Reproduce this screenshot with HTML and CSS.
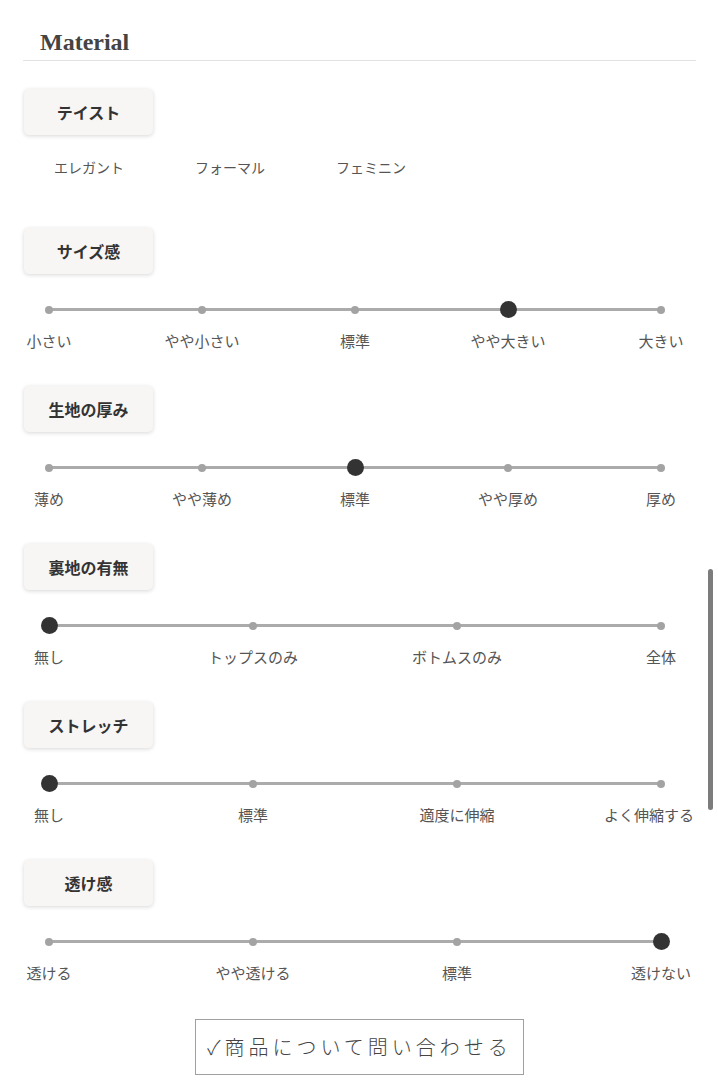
FILE: index.html
```html
<!DOCTYPE html>
<html lang="ja">
<head>
    <meta charset="UTF-8">
    <meta name="viewport" content="width=device-width, initial-scale=1.0">
    <title>Material</title>
    <link rel="stylesheet" href="styles.css">
</head>
<body>
    <div class="material">
        <h2 class="material-title">Material</h2>

        <!-- テイスト -->
        <div class="spec first">
            <div class="spec-label">テイスト</div>
            <div class="taste-list">
                <span class="taste-item">エレガント</span>
                <span class="taste-item">フォーマル</span>
                <span class="taste-item">フェミニン</span>
            </div>
        </div>

        <div class="spec">
            <div class="spec-label">サイズ感</div>
            <div class="scale">
                <div class="point"><span class="dot"></span><span class="point-text">小さい</span></div>
                <div class="point"><span class="dot"></span><span class="point-text">やや小さい</span></div>
                <div class="point"><span class="dot"></span><span class="point-text">標準</span></div>
                <div class="point active"><span class="dot"></span><span class="point-text">やや大きい</span></div>
                <div class="point"><span class="dot"></span><span class="point-text">大きい</span></div>
            </div>
        </div>

        <div class="spec">
            <div class="spec-label">生地の厚み</div>
            <div class="scale">
                <div class="point"><span class="dot"></span><span class="point-text">薄め</span></div>
                <div class="point"><span class="dot"></span><span class="point-text">やや薄め</span></div>
                <div class="point active"><span class="dot"></span><span class="point-text">標準</span></div>
                <div class="point"><span class="dot"></span><span class="point-text">やや厚め</span></div>
                <div class="point"><span class="dot"></span><span class="point-text">厚め</span></div>
            </div>
        </div>

        <div class="spec">
            <div class="spec-label">裏地の有無</div>
            <div class="scale">
                <div class="point active"><span class="dot"></span><span class="point-text">無し</span></div>
                <div class="point"><span class="dot"></span><span class="point-text">トップスのみ</span></div>
                <div class="point"><span class="dot"></span><span class="point-text">ボトムスのみ</span></div>
                <div class="point"><span class="dot"></span><span class="point-text">全体</span></div>
            </div>
        </div>

        <div class="spec">
            <div class="spec-label">ストレッチ</div>
            <div class="scale">
                <div class="point active"><span class="dot"></span><span class="point-text">無し</span></div>
                <div class="point"><span class="dot"></span><span class="point-text">標準</span></div>
                <div class="point"><span class="dot"></span><span class="point-text">適度に伸縮</span></div>
                <div class="point"><span class="dot"></span><span class="point-text edge">よく伸縮する</span></div>
            </div>
        </div>

        <div class="spec">
            <div class="spec-label">透け感</div>
            <div class="scale">
                <div class="point"><span class="dot"></span><span class="point-text">透ける</span></div>
                <div class="point"><span class="dot"></span><span class="point-text">やや透ける</span></div>
                <div class="point"><span class="dot"></span><span class="point-text">標準</span></div>
                <div class="point active"><span class="dot"></span><span class="point-text">透けない</span></div>
            </div>
        </div>

        <div class="contact">
            <a class="contact-btn" href="#">✓商品について問い合わせる</a>
        </div>
    </div>

    <div class="scroll-thumb"></div>
</body>
</html>
```

FILE: styles.css
```css
body {
    margin: 0;
    background: #fff;
    font-family: "Noto Sans CJK JP", "Noto Sans", sans-serif;
    color: #555;
}

.material {
    padding: 0 22px 0 23px;
}

.material-title {
    margin: 0;
    padding: 28px 0 4px 17px;
    font-family: "Liberation Serif", serif;
    font-size: 24px;
    line-height: 28px;
    font-weight: bold;
    color: #444;
    border-bottom: 1px solid #e2e2e2;
}

.spec {
    margin-top: 35px;
}

.spec.first {
    margin-top: 28px;
}

.spec-label {
    width: 129px;
    height: 46px;
    margin-left: 1px;
    background: #f7f6f4;
    border-radius: 5px;
    box-shadow: 0 1px 4px rgba(0,0,0,0.16);
    text-align: center;
    line-height: 46px;
    font-size: 16px;
    font-weight: bold;
    color: #333;
}

/* テイスト */
.taste-list {
    display: flex;
    gap: 71px;
    padding: 0 0 16px 31px;
    margin-top: 22px;
}

.taste-item {
    font-size: 14px;
    line-height: 20px;
    color: #555;
}

/* スケール */
.scale {
    display: flex;
    justify-content: space-between;
    margin: 27px 35px 0 26px;
    background: linear-gradient(#ababab, #ababab) no-repeat 0 7px / 100% 3px;
}

.point {
    width: 0;
    display: flex;
    flex-direction: column;
    align-items: center;
}

.dot {
    height: 17px;
    display: flex;
    align-items: center;
}

.dot::before {
    content: "";
    display: block;
    width: 8px;
    height: 8px;
    border-radius: 50%;
    background: #a3a3a3;
}

.point.active .dot::before {
    width: 17px;
    height: 17px;
    background: #333;
}

.point-text {
    margin-top: 13px;
    font-size: 15px;
    line-height: 20px;
    white-space: nowrap;
    color: #555;
}

.point-text.edge {
    margin-right: 24px;
}

/* お問い合わせ */
.contact {
    display: flex;
    justify-content: center;
    margin-top: 36px;
}

.contact-btn {
    display: block;
    width: 327px;
    height: 54px;
    border: 1px solid #a0a0a0;
    text-align: center;
    line-height: 54px;
    font-size: 20px;
    font-weight: 300;
    letter-spacing: 4px;
    color: #444;
    text-decoration: none;
}

.scroll-thumb {
    position: fixed;
    left: 708px;
    top: 569px;
    width: 5px;
    height: 241px;
    border-radius: 3px;
    background: #7c7c7c;
}
```
